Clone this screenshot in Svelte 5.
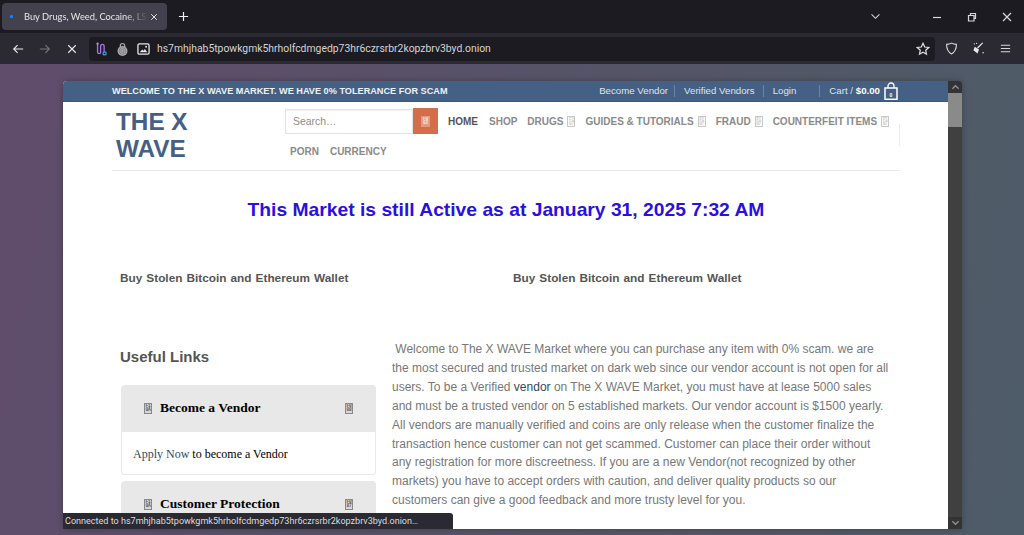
<script>
  const navTop = [
    { label: 'Drugs', hex: ['F1', '07'] },
    { label: 'Guides & Tutorials', hex: ['F1', '07'] },
    { label: 'Fraud', hex: ['F1', '07'] },
    { label: 'Counterfeit Items', hex: ['F1', '07'] }
  ];
  const accordions = [
    { title: 'Become a Vendor', left: ['F1', '0A'], right: ['F0', '08'], open: true },
    { title: 'Customer Protection', left: ['F1', '0A'], right: ['F0', '87'], open: false }
  ];
</script>

{#snippet tofu(hex, cls)}
  <span class="tofu {cls}"><span>{hex[0]}</span><span>{hex[1]}</span></span>
{/snippet}

<div class="browser">
  <div class="tabstrip">
    <div class="tab">
      <span class="dot"></span>
      <span class="tabtitle">Buy Drugs, Weed, Cocaine, LSD, Meth</span>
      <svg class="ic tabx" viewBox="0 0 10 10"><path d="M1.5 1.5l7 7M8.5 1.5l-7 7" /></svg>
    </div>
    <svg class="ic plus" viewBox="0 0 12 12"><path d="M6 1v10M1 6h10" /></svg>
    <div class="spacer"></div>
    <svg class="ic chev" viewBox="0 0 12 8"><path d="M1.5 1.5L6 6l4.500-4.500" /></svg>
    <div class="winbtns">
      <svg class="ic" viewBox="0 0 10 10"><path d="M1 5.500h8" /></svg>
      <svg class="ic" viewBox="0 0 10 10"><path d="M1.500 3.500h5.500v5.500h-5.500zM3.500 3.500v-2h5v5h-1.500" /></svg>
      <svg class="ic" viewBox="0 0 10 10"><path d="M1 1l8 8M9 1l-8 8" /></svg>
    </div>
  </div>

  <div class="navbar">
    <div class="navbtns">
      <svg class="ic nb" viewBox="0 0 14 14"><path d="M13 7H2M6.500 2.500L2 7l4.500 4.500" /></svg>
      <svg class="ic nb dim" viewBox="0 0 14 14"><path d="M1 7h11M7.500 2.500L12 7l-4.500 4.500" /></svg>
      <svg class="ic nb" viewBox="0 0 12 12"><path d="M1.500 1.500l9 9M10.500 1.500l-9 9" /></svg>
    </div>
    <div class="urlbar">
      <svg class="uic" viewBox="0 0 14 16" fill="none" stroke-width="1.500">
        <path d="M2.500 2v9c0 3 3.500 3 3.500 0V5c0-3 4-3 4 0v6" stroke="#a878e8" />
        <circle cx="2.500" cy="2" r="1.300" fill="#c58ae0" stroke="none" />
        <circle cx="10.500" cy="13" r="1.800" stroke="#3fa0e8" />
      </svg>
      <svg class="uic" viewBox="0 0 14 16">
        <path d="M3.800 7V4.200a3.200 3.200 0 0 1 6.400 0V7H8.800V4.200a1.800 1.800 0 0 0-3.600 0V7z" fill="#a9a9ad" />
        <circle cx="7" cy="10.200" r="5.700" fill="#a9a9ad" />
        <circle cx="7" cy="10.200" r="3.800" fill="none" stroke="#6c6b72" stroke-width=".7" />
        <circle cx="7" cy="10.200" r="1.800" fill="none" stroke="#6c6b72" stroke-width=".7" />
      </svg>
      <svg class="uic" viewBox="0 0 14 14">
        <rect x="1" y="1.500" width="12" height="11" rx="1.500" fill="none" stroke="#e6e6e8" stroke-width="1.400" />
        <path d="M3 10.500l2.500-3 1.500 1.500 1.500-2 2.500 3.500z" fill="#e6e6e8" />
        <circle cx="9.800" cy="4.600" r="1" fill="#e6e6e8" />
      </svg>
      <span class="url">hs7mhjhab5tpowkgmk5hrholfcdmgedp73hr6czrsrbr2kopzbrv3byd.onion</span>
      <svg class="ic star" viewBox="0 0 14 14"><path d="M7 1.300l1.700 3.700 4 .5-3 2.700.8 4L7 10.200l-3.500 2 .8-4-3-2.700 4-.5z" /></svg>
    </div>
    <div class="tools">
      <svg class="ic" viewBox="0 0 14 14"><path d="M7 1.200c1.800 1 3.500 1.300 5.300 1.300 0 4.800-1.300 8.300-5.300 10.300C3 10.800 1.700 7.300 1.700 2.500 3.500 2.500 5.200 2.200 7 1.200z" /></svg>
      <svg class="tool" viewBox="0 0 14 14">
        <path d="M3 5l4.500 3-1.500 4.500-4.500-3.500z" fill="#e8e8ea" />
        <path d="M6 6.500L11.500 1" stroke="#e8e8ea" stroke-width="1.300" fill="none" />
        <circle cx="2.500" cy="2" r=".7" fill="#e8e8ea" />
        <circle cx="5" cy="1.500" r=".6" fill="#e8e8ea" />
        <circle cx="12" cy="11.500" r=".8" fill="#e8e8ea" />
      </svg>
      <svg class="ic" viewBox="0 0 14 14"><path d="M2 3.500h10M2 7h10M2 10.500h10" /></svg>
    </div>
  </div>

  <div class="stage">
    <div class="window">
      <div class="page">
        <div class="topbar">
          <span class="welcome">WELCOME TO THE X WAVE MARKET. WE HAVE 0% TOLERANCE FOR SCAM</span>
          <div class="toplinks">
            <a href="#v">Become Vendor</a>
            <a href="#vv">Verified Vendors</a>
            <a href="#l" class="login">Login</a>
            <a href="#c" class="cart">Cart / <b>$0.00</b></a>
            <svg class="bag" viewBox="0 0 14 18" fill="none" stroke="#fff">
              <rect x="1" y="6" width="12" height="11.300" stroke-width="1.500" />
              <path d="M4 6V4a3 3 0 0 1 6 0v2" stroke-width="1.300" />
              <text x="7" y="14.500" class="bagnum">0</text>
            </svg>
          </div>
        </div>

        <div class="container">
          <header class="header">
            <div class="logo">THE X WAVE</div>
            <nav class="nav">
              <form class="search">
                <span class="input">Search…</span>
                <span class="sbtn">{@render tofu(['F0', '02'], 'light')}</span>
              </form>
              <a href="#h" class="item active">Home</a>
              <a href="#s" class="item shop">Shop</a>
              {#each navTop as n}
                <a href="#n" class="item">{n.label}{@render tofu(n.hex, 'pale')}</a>
              {/each}
              <a href="#p" class="item second">Porn</a>
              <a href="#c" class="item second">Currency</a>
              <span class="divider"></span>
            </nav>
          </header>

          <h1>This Market is still Active as at January 31, 2025 7:32 AM</h1>

          <div class="buys">
            <a href="#a">Buy Stolen Bitcoin and Ethereum Wallet</a>
            <a href="#b">Buy Stolen Bitcoin and Ethereum Wallet</a>
          </div>

          <div class="columns">
            <aside>
              <h2>Useful Links</h2>
              {#each accordions as a}
                <div class="acc">
                  <div class="acchead">
                    {@render tofu(a.left, 'dark')}
                    <strong>{a.title}</strong>
                    {@render tofu(a.right, 'dark end')}
                  </div>
                  {#if a.open}
                    <div class="accbody"><a href="#n">Apply Now</a> to become a Vendor</div>
                  {/if}
                </div>
              {/each}
            </aside>
            <p class="intro">&nbsp;Welcome to The X WAVE Market where you can purchase any item with 0% scam. we are the most secured and trusted market on dark web since our vendor account is not open for all users. To be a Verified <a href="#v">vendor</a> on The X WAVE Market, you must have at lease 5000 sales and must be a trusted vendor on 5 established markets. Our vendor account is $1500 yearly. All vendors are manually verified and coins are only release when the customer finalize the transaction hence customer can not get scammed. Customer can place their order without any registration for more discreetness. If you are a new Vendor(not recognized by other markets) you have to accept orders with caution, and deliver quality products so our customers can give a good feedback and more trusty level for you.</p>
          </div>
        </div>
      </div>

      <div class="scrollbar">
        <div class="sb-btn"><svg viewBox="0 0 10 6"><path d="M1.500 5L5 1.500 8.500 5" /></svg></div>
        <div class="thumb"></div>
        <div class="track"></div>
        <div class="sb-btn"><svg viewBox="0 0 10 6"><path d="M1.500 1L5 4.500 8.500 1" /></svg></div>
      </div>

      <div class="status">Connected to hs7mhjhab5tpowkgmk5hrholfcdmgedp73hr6czrsrbr2kopzbrv3byd.onion…</div>
    </div>
  </div>
</div>

<style>
  :global(body) { margin: 0; background: #1c1b22; }
  a { text-decoration: none; color: inherit; }
  .browser {
    width: 1024px; height: 535px; display: flex; flex-direction: column; overflow: hidden;
    font-family: "Liberation Sans", Arial, sans-serif;
  }
  .ic { fill: none; stroke: #d8d8da; stroke-width: 1.200; display: block; }

  .tabstrip { height: 33px; background: #1c1b22; display: flex; align-items: center; box-sizing: border-box; padding: 0 0 0 2px; flex: none; }
  .tab { width: 165px; height: 27px; background: #42414d; border-radius: 4px; display: flex; align-items: center; box-sizing: border-box; padding-left: 8px; }
  .dot { width: 3px; height: 3px; border-radius: 50%; background: #0a84ff; box-shadow: 0 0 1px #0a84ff; }
  .tabtitle {
    margin-left: 11px; width: 124px; white-space: nowrap; overflow: hidden; font: 9.300px Lato, sans-serif; color: #e6e6e8;
    mask-image: linear-gradient(to right, #000 82%, transparent);
  }
  .tabx { width: 8px; height: 8px; margin-left: 2px; stroke: #e8e8ea; }
  .plus { width: 11px; height: 11px; margin-left: 11px; stroke: #f0f0f2; stroke-width: 1.300; }
  .spacer { flex: 1; }
  .chev { width: 11px; height: 7px; margin-right: 51px; }
  .winbtns { display: flex; gap: 25px; padding-right: 12px; }
  .winbtns svg { width: 10px; height: 10px; }

  .navbar { height: 31px; background: #2b2a33; display: flex; align-items: center; flex: none; }
  .navbtns { display: flex; align-items: center; width: 89px; box-sizing: border-box; padding-left: 12px; gap: 15px; }
  .nb { width: 12px; height: 12px; stroke: #eaeaec; stroke-width: 1.300; }
  .nb:nth-child(3) { margin-left: 1px; width: 10px; height: 10px; }
  .nb.dim { stroke: #75747c; }
  .urlbar { width: 846px; height: 24px; background: #1c1b22; border-radius: 4px; display: flex; align-items: center; box-sizing: border-box; padding-left: 6px; }
  .uic { width: 13px; height: 14px; margin-right: 8px; flex: none; }
  .url { font: 10.380px Roboto, sans-serif; color: #d4d4d6; margin-left: -1px; white-space: nowrap; flex: 1; }
  .star { width: 14px; height: 14px; margin-right: 5px; stroke: #e0e0e2; }
  .tools { display: flex; align-items: center; gap: 14px; padding-left: 10px; }
  .tools svg { width: 13px; height: 13px; }
  .tool { display: block; }

  .stage {
    flex: 1; min-height: 0; box-sizing: border-box; padding: 17px 62px 6px 63px;
    background: linear-gradient(100deg, #604c6b 0%, #565367 50%, #4e5c68 100%);
  }
  .window { height: 100%; display: flex; position: relative; border-radius: 4px 4px 0 0; overflow: hidden; box-shadow: 0 0 6px rgba(0,0,0,.25); }
  .page { flex: 1; min-width: 0; background: #fff; overflow: hidden; }

  .topbar { height: 21px; background: #446084; border-bottom: 1px solid #3c5877; box-sizing: border-box; display: flex; align-items: center; padding: 0 50px 0 49px; color: #fff; }
  .welcome { font-size: 9.170px; font-weight: bold; color: #eef1f5; white-space: nowrap; }
  .toplinks { margin-left: auto; display: flex; align-items: center; color: #dfe5ec; font-size: 9.700px; white-space: nowrap; }
  .toplinks a { padding: 0 8px 0 9px; border-left: 1px solid #6b84a3; line-height: 12px; }
  .toplinks a:first-child { border-left: 0; padding-right: 6px; }
  .toplinks .login { padding-right: 23px; }
  .toplinks .cart { padding-right: 4px; padding-left: 9px; }
  .toplinks b { color: #fff; }
  .bag { width: 14px; height: 18px; }
  .bagnum { font: bold 5px "Liberation Sans", sans-serif; fill: #fff; stroke: none; text-anchor: middle; }

  .container { margin: 0 48px 0 49px; }
  .header { display: flex; height: 68px; border-bottom: 1px solid #ececec; }
  .logo { width: 173px; flex: none; box-sizing: border-box; padding: 7px 60px 0 4px; font-size: 24.300px; font-weight: bold; line-height: 26.600px; color: #446084; }
  .nav { flex: 1; display: flex; flex-wrap: wrap; align-content: flex-start; align-items: center; padding-top: 7px; position: relative; }
  .search { display: flex; width: 153px; height: 25px; margin-right: 10px; }
  .input { flex: 1; box-sizing: border-box; border: 1px solid #e3e3e3; padding-left: 7px; font-size: 10.400px; line-height: 23px; color: #8d8d8d; box-shadow: inset 0 1px 2px rgba(0,0,0,.06); }
  .sbtn { width: 25px; margin: -1px 0 0; background: #d26e4b; display: flex; align-items: center; justify-content: center; }
  .item { font-size: 10px; font-weight: bold; color: #8a8a8a; text-transform: uppercase; white-space: nowrap; margin-right: 10px; display: inline-flex; align-items: center; gap: 4px; }
  .item.active { color: #555; margin-right: 11px; }
  .item.second { margin: 12px 11px 0 5px; }
  .item.second + .item.second { margin-left: 0; }
  .divider { position: absolute; right: 0; top: 22px; height: 22px; border-right: 1px solid #ececec; }

  .tofu { display: inline-flex; flex-direction: column; align-items: center; justify-content: center; box-sizing: border-box; width: 8px; height: 11px; border: 1px solid currentColor; font: bold 4.500px/4px "Liberation Mono", monospace; overflow: hidden; letter-spacing: -.3px; }
  .tofu.pale { color: #c8c8c8; }
  .tofu.light { color: #f8e6df; border-color: transparent; background: #e39b80; width: 9px; }
  .tofu.dark { color: #555; border-color: #888; background: #d8d8d8; }
  .tofu.end { margin-left: auto; }

  h1 { margin: 0; padding-top: 28px; font-size: 19.280px; line-height: 22px; text-align: center; color: #2a10e0; font-weight: bold; }
  .buys { display: flex; padding: 49px 0 0 8px; font-size: 11.800px; font-weight: bold; color: #555; line-height: 16px; word-spacing: .8px; }
  .buys a { width: 393px; flex: none; white-space: nowrap; }

  .columns { display: flex; padding-top: 54px; }
  aside { width: 264px; flex: none; padding: 0 0 0 8px; box-sizing: border-box; }
  h2 { margin: 8px 0 19px; font-size: 15px; line-height: 18px; color: #555; font-weight: bold; }
  .acc { width: 255px; margin: 0 0 6px 1px; border-radius: 3px; border: 1px solid #e8e8e8; box-sizing: border-box; font-family: "Liberation Serif", serif; }
  .acchead { height: 46px; background: #e8e8e8; display: flex; align-items: center; padding: 0 22px 2px 22px; box-sizing: border-box; }
  .acchead strong { font-size: 13.500px; color: #000; margin-left: 8px; }
  .accbody { height: 42px; box-sizing: border-box; padding: 14px 11px 0; font-size: 12px; line-height: 16px; color: #000; }
  .accbody a { color: #334862; }
  .intro { margin: 0 0 0 16px; width: 498px; flex: none; font-size: 12px; line-height: 18.900px; color: #777; }
  .intro a { color: #334862; }

  .scrollbar { width: 14px; flex: none; background: #404040; display: flex; flex-direction: column; }
  .sb-btn { height: 12px; background: #333; display: flex; align-items: center; justify-content: center; flex: none; }
  .sb-btn svg { width: 9px; height: 6px; fill: none; stroke: #8f8f8f; stroke-width: 1.500; }
  .thumb { height: 34px; background: #8a8a8a; flex: none; }
  .track { flex: 1; }

  .status { position: absolute; left: 0; bottom: 0; width: 390px; height: 16px; box-sizing: border-box; padding-left: 2px; background: #2b2a33; border-top-right-radius: 3px; color: #dcdcde; font: 9.050px/16px Roboto, sans-serif; white-space: nowrap; overflow: hidden; }
</style>
